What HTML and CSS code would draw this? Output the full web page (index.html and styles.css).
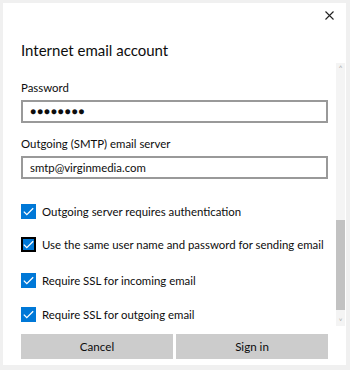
FILE: index.html
```html
<!DOCTYPE html>
<html>

<head>
    <meta charset="UTF-8">
    <title>Internet email account</title>
    <link rel="stylesheet" href="styles.css">
</head>

<body>
    <div class="dialog">
        <div class="titlebar">
            <button class="close" title="Close">
                <svg width="9" height="9" viewBox="0 0 9 9">
                    <path d="M0.5 0.5 L8.5 8.5 M8.5 0.5 L0.5 8.5" stroke="#222" stroke-width="1.1" fill="none" />
                </svg>
            </button>
        </div>
        <h1 class="title">Internet email account</h1>

        <div class="main">
            <div class="content">
                <label class="field-label">Password</label>
                <div class="textbox password">&#9679;&#9679;&#9679;&#9679;&#9679;&#9679;&#9679;&#9679;</div>

                <label class="field-label">Outgoing (SMTP) email server</label>
                <div class="textbox">smtp@virginmedia.com</div>

                <div class="checks">
                    <div class="check">
                        <span class="box"><svg width="11" height="9" viewBox="0 0 11 9"><path d="M0.8 4.6 L3.8 7.6 L10.2 1.2" stroke="#fff" stroke-width="1.3" fill="none" /></svg></span>
                        <span>Outgoing server requires authentication</span>
                    </div>
                    <div class="check focused">
                        <span class="box"><svg width="11" height="9" viewBox="0 0 11 9"><path d="M0.8 4.6 L3.8 7.6 L10.2 1.2" stroke="#fff" stroke-width="1.3" fill="none" /></svg></span>
                        <span>Use the same user name and password for sending email</span>
                    </div>
                    <div class="check">
                        <span class="box"><svg width="11" height="9" viewBox="0 0 11 9"><path d="M0.8 4.6 L3.8 7.6 L10.2 1.2" stroke="#fff" stroke-width="1.3" fill="none" /></svg></span>
                        <span>Require SSL for incoming email</span>
                    </div>
                    <div class="check">
                        <span class="box"><svg width="11" height="9" viewBox="0 0 11 9"><path d="M0.8 4.6 L3.8 7.6 L10.2 1.2" stroke="#fff" stroke-width="1.3" fill="none" /></svg></span>
                        <span>Require SSL for outgoing email</span>
                    </div>
                </div>

                <div class="buttons">
                    <button class="btn">Cancel</button>
                    <button class="btn">Sign in</button>
                </div>
            </div>

            <div class="scrollbar">
                <span class="arrow">&#708;</span>
                <div class="track">
                    <div class="thumb"></div>
                </div>
                <span class="arrow">&#709;</span>
            </div>
        </div>
    </div>
</body>

</html>
```

FILE: styles.css
```css
html,
body {
    margin: 0;
    height: 100%;
}

body {
    background-color: #f0f0f0;
    font-family: Lato, "Noto Sans", sans-serif;
    color: #0d0d0d;
    font-size: 11.4px;
    padding: 3px 4px 5px 3px;
    box-sizing: border-box;
}

.dialog {
    background-color: #fff;
    height: 100%;
    display: flex;
    flex-direction: column;
}

.titlebar {
    display: flex;
    justify-content: flex-end;
    height: 24px;
}

.close {
    border: none;
    background: none;
    width: 34px;
    height: 24px;
    padding: 0;
    display: flex;
    align-items: center;
    justify-content: center;
}

.title {
    font-size: 15px;
    font-weight: normal;
    margin: 12px 0 0 18px;
    line-height: 22px;
}

.main {
    display: flex;
    flex: 1;
    margin-top: 2px;
}

.content {
    flex: 1;
    min-width: 0;
    padding: 17px 0 0 18px;
    display: flex;
    flex-direction: column;
}

.field-label {
    display: block;
    line-height: 16px;
}

.textbox {
    border: 2px solid #999;
    height: 19px;
    line-height: 19px;
    padding: 0 7px;
    margin: 4px 0 13px 0;
}

.password {
    font-size: 10px;
    letter-spacing: 0.9px;
}

.checks {
    margin-top: 12px;
}

.check {
    display: flex;
    align-items: center;
    height: 15px;
    margin-bottom: 19px;
    white-space: nowrap;
}

.check:first-child {
    margin-bottom: 18px;
}

.check:nth-child(2) {
    margin-bottom: 21px;
}

.box {
    width: 15px;
    height: 15px;
    background-color: #0078d7;
    box-sizing: border-box;
    margin-right: 6px;
    display: flex;
    align-items: center;
    justify-content: center;
    flex-shrink: 0;
}

.focused .box {
    border: 2px solid #000;
}

.buttons {
    display: flex;
    gap: 3px;
    margin-top: -7px;
}

.btn {
    flex: 1;
    height: 25px;
    border: none;
    background-color: #ccc;
    font-family: inherit;
    font-size: 11.6px;
    color: #0d0d0d;
}

.scrollbar {
    width: 9px;
    margin-left: 8px;
    margin-right: 1px;
    margin-bottom: 39px;
    background-color: #f4f4f4;
    display: flex;
    flex-direction: column;
    align-items: center;
}

.arrow {
    font-size: 8px;
    line-height: 10px;
    color: #aaa;
}

.track {
    flex: 1;
    width: 100%;
    display: flex;
    flex-direction: column;
    justify-content: flex-end;
}

.thumb {
    height: 90px;
    margin-bottom: 6px;
    background-color: #c2c2c2;
}
```
